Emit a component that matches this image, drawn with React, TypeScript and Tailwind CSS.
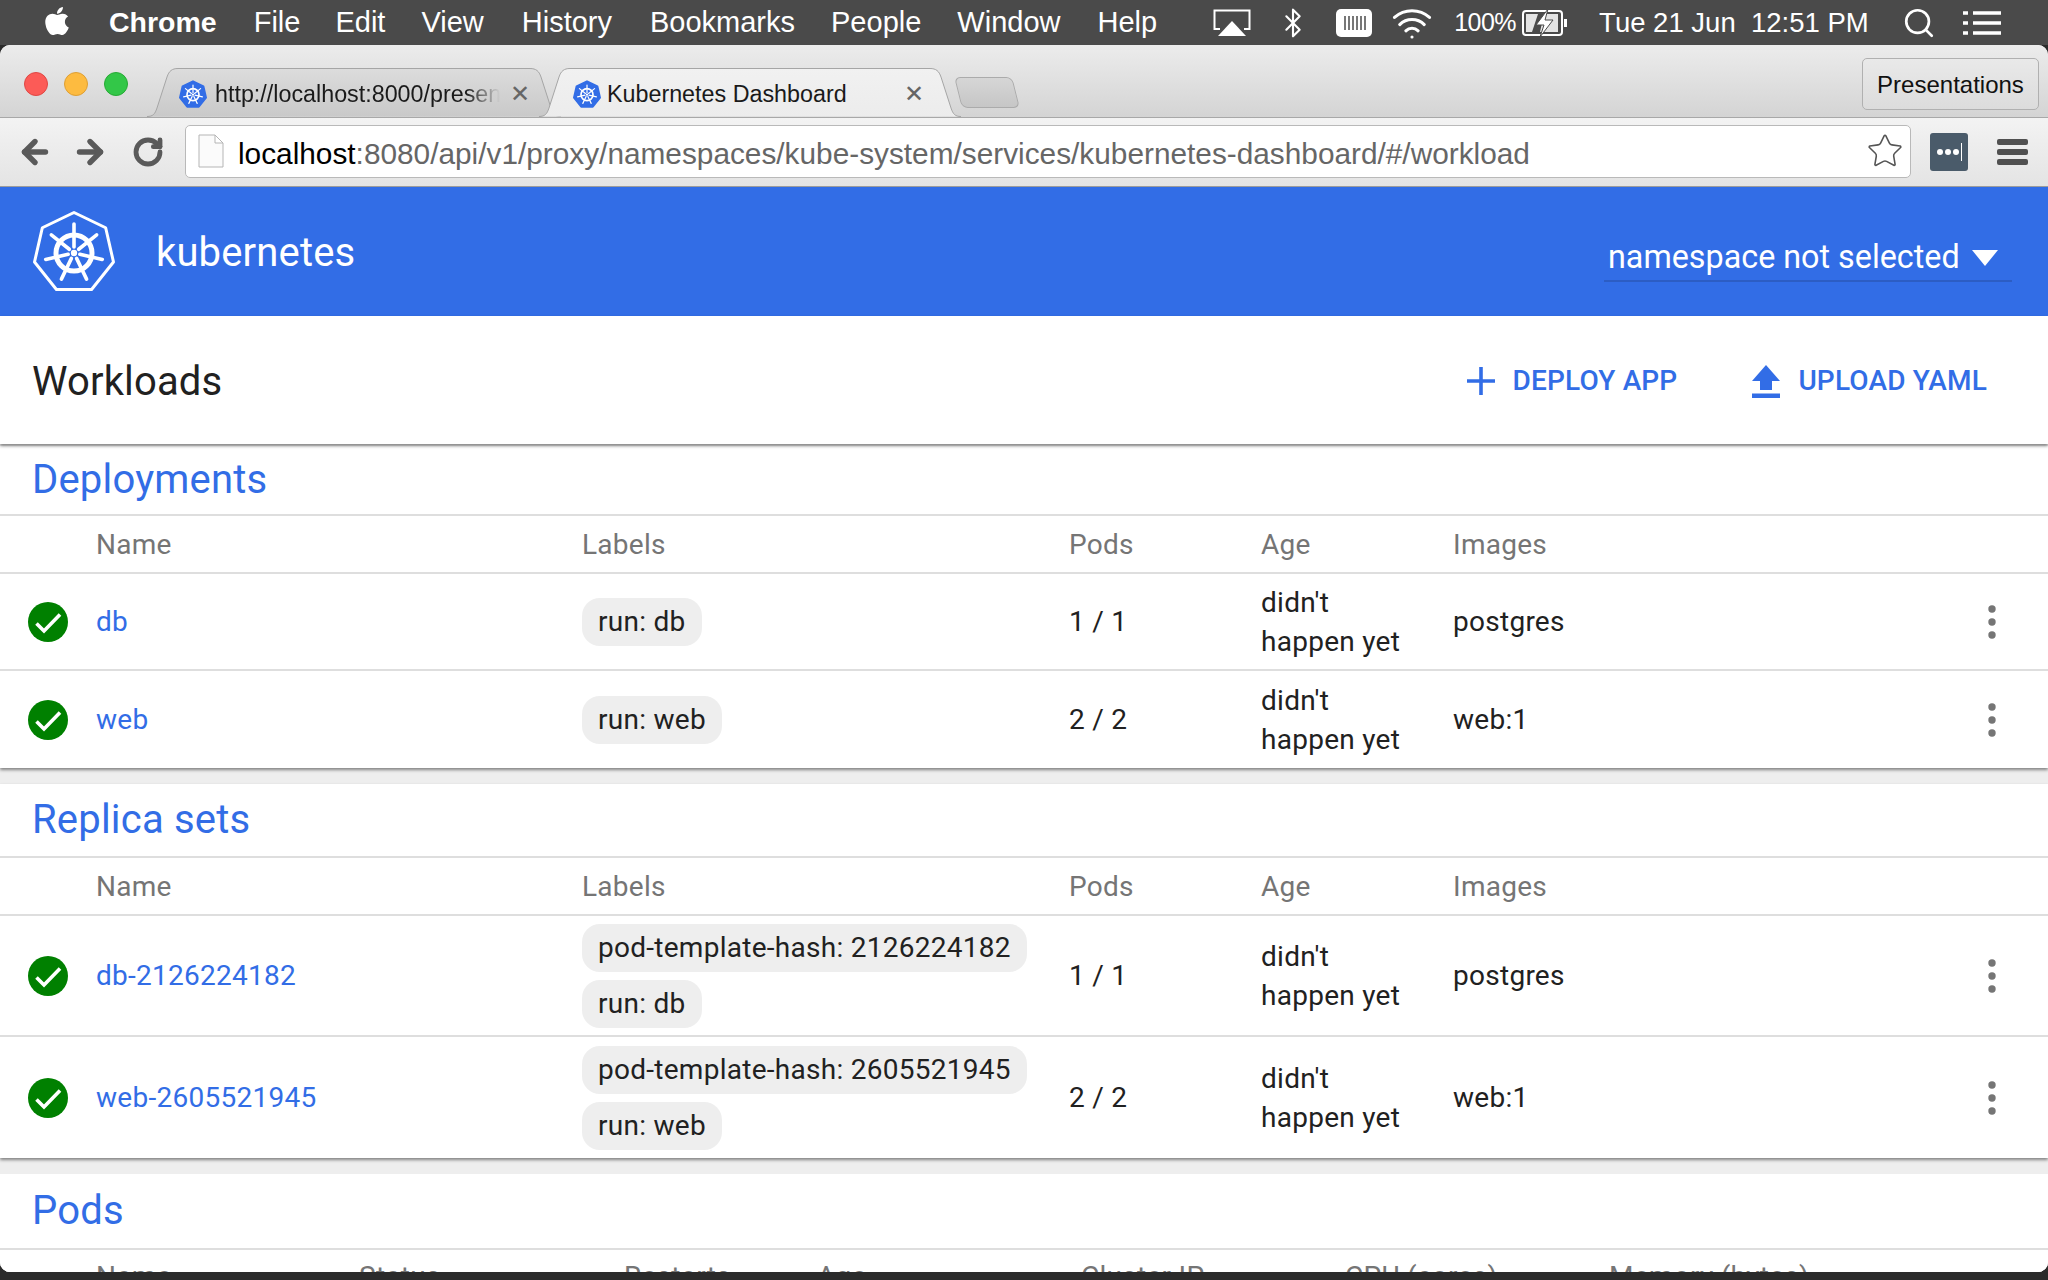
import React from "react";
import { FaApple } from "react-icons/fa";
import { ArrowLeft, ArrowRight, Bluetooth, RotateCw, Search, Star, Wifi } from "lucide-react";

const heptagon = (r: number, cx: number, cy: number) =>
    Array.from({ length: 7 }, (_, k) => {
        const a = (k * 2 * Math.PI) / 7;
        return `${cx + r * Math.sin(a)},${cy - r * Math.cos(a)}`;
    }).join(" ");

const KubeWheel = ({ color, cx, cy }: { color: string; cx: number; cy: number }) => (
    <g stroke={color} fill="none" strokeLinecap="round">
        <circle cx={cx} cy={cy} r="18" strokeWidth="5" />
        <circle cx={cx} cy={cy} r="3.2" fill={color} stroke="none" />
        {Array.from({ length: 7 }, (_, k) => {
            const a = (k * 2 * Math.PI) / 7;
            return (
                <line
                    key={k}
                    x1={cx + 6 * Math.sin(a)}
                    y1={cy - 6 * Math.cos(a)}
                    x2={cx + 29 * Math.sin(a)}
                    y2={cy - 29 * Math.cos(a)}
                    strokeWidth="3.6"
                />
            );
        })}
    </g>
);

const Logo = () => (
    <svg width="84" height="84" viewBox="0 0 84 84" className="shrink-0">
        <polygon points={heptagon(40.5, 42, 43)} fill="none" stroke="white" strokeWidth="3" strokeLinejoin="round" />
        <KubeWheel color="white" cx={42} cy={43} />
    </svg>
);

const Favicon = () => (
    <svg width="28" height="29" viewBox="0 0 84 87" className="shrink-0">
        <polygon points={heptagon(40, 42, 44)} fill="#326de6" stroke="#326de6" strokeWidth="6" strokeLinejoin="round" />
        <KubeWheel color="white" cx={42} cy={44} />
    </svg>
);

const Tab = ({ active, children, width }: { active?: boolean; children: React.ReactNode; width: number }) => (
    <>
        <svg width={width} height="49" viewBox={`0 0 ${width} 49`} className="absolute inset-0">
            <defs>
                <linearGradient id={active ? "tabOn" : "tabOff"} x1="0" y1="0" x2="0" y2="1">
                    <stop offset="0" stopColor={active ? "#f1f1f1" : "#dcdcdc"} />
                    <stop offset="1" stopColor={active ? "#ececec" : "#c9c9c9"} />
                </linearGradient>
            </defs>
            <path
                d={`M0 48.5 C6 48.5 8 46 10 40 L20 9 C22 3 25 .5 31 .5 L${width - 31} .5 C${width - 25} .5 ${width - 22} 3 ${width - 20} 9 L${width - 10} 40 C${width - 8} 46 ${width - 6} 48.5 ${width} 48.5`}
                fill={`url(#${active ? "tabOn" : "tabOff"})`}
                stroke="#a5a5a5"
            />
        </svg>
        <div className="relative flex items-center w-full pt-[3px] text-[23.3px] text-[#1a1a1a] [font-family:'Liberation_Sans',sans-serif]">
            {children}
        </div>
    </>
);

const Check = () => (
    <svg width="40" height="40" viewBox="0 0 40 40">
        <circle cx="20" cy="20" r="20" fill="#008000" />
        <path d="M8.5 21.5 L16 29 L32 12.5" fill="none" stroke="white" strokeWidth="3.6" />
    </svg>
);

const Kebab = () => (
    <svg width="8" height="34" viewBox="0 0 8 34">
        <circle cx="4" cy="4" r="3.7" fill="#757575" />
        <circle cx="4" cy="17" r="3.7" fill="#757575" />
        <circle cx="4" cy="30" r="3.7" fill="#757575" />
    </svg>
);

const Chip = ({ text }: { text: string }) => (
    <span className="block w-fit h-12 leading-[48px] px-[16px] rounded-[18px] bg-[#eeeeee] text-[#212121]">{text}</span>
);

const rowGrid = "grid grid-cols-[96px_486px_487px_192px_192px_1fr_72px]";

type Row = { name: string; labels: string[]; pods: string; image: string };

const Card = ({ title, rows, rowClass, titleClass }: { title: string; rows: Row[]; rowClass: string; titleClass: string }) => (
    <section className="bg-white shadow-[0_2px_3px_rgba(0,0,0,0.45)]">
        <h2 className={`${titleClass} pl-[32px] flex items-center text-[40px] tracking-[0.2px] text-[#326de6] border-b-2 border-[#dedede]`}>{title}</h2>
        <div className={`${rowGrid} h-[58px] pt-[2px] items-center text-[#757575] border-b-2 border-[#dedede]`}>
            <span className="col-start-2">Name</span>
            <span>Labels</span>
            <span>Pods</span>
            <span>Age</span>
            <span>Images</span>
        </div>
        {rows.map((r, i) => (
            <div
                key={r.name}
                className={`${rowGrid} ${rowClass} items-center text-[#212121] ${i < rows.length - 1 ? "border-b-2 border-[#dedede]" : ""}`}
            >
                <span className="pl-7 flex">
                    <Check />
                </span>
                <a className="text-[#326de6]">{r.name}</a>
                <div className="flex flex-col gap-2">
                    {r.labels.map((l) => (
                        <Chip key={l} text={l} />
                    ))}
                </div>
                <span>{r.pods}</span>
                <span className="leading-[39px]">
                    didn't
                    <br />
                    happen yet
                </span>
                <span>{r.image}</span>
                <span className="flex pl-3">
                    <Kebab />
                </span>
            </div>
        ))}
    </section>
);

const MenuItem = ({ children, className }: { children: React.ReactNode; className: string }) => (
    <span className={`shrink-0 ${className}`}>{children}</span>
);

export default function App() {
    return (
        <div className="h-screen overflow-hidden bg-[#2b2b2b] flex flex-col [font-family:Roboto,sans-serif] text-[28px] tracking-[0.27px]">
            {/* mac menu bar */}
            <div className="h-[45px] shrink-0 bg-[#4a4a4a] text-white flex items-center text-[29px] tracking-normal [font-family:'Liberation_Sans',sans-serif] pl-[41px]">
                <FaApple size={32} className="shrink-0 -mt-1" />
                <MenuItem className="ml-[36px] font-bold text-[28.5px]">Chrome</MenuItem>
                <MenuItem className="ml-[37px]">File</MenuItem>
                <MenuItem className="ml-[35px]">Edit</MenuItem>
                <MenuItem className="ml-[36px]">View</MenuItem>
                <MenuItem className="ml-[38px]">History</MenuItem>
                <MenuItem className="ml-[38px]">Bookmarks</MenuItem>
                <MenuItem className="ml-[36px]">People</MenuItem>
                <MenuItem className="ml-[36px]">Window</MenuItem>
                <MenuItem className="ml-[37px]">Help</MenuItem>
                <svg width="38" height="28" viewBox="0 0 38 28" className="ml-[56px] shrink-0">
                    <path d="M7 20 H1.5 V1.5 H36.5 V20 H31" fill="none" stroke="white" strokeWidth="2" />
                    <path d="M19 12 L33 27 H5 Z" fill="white" />
                </svg>
                <Bluetooth size={32} strokeWidth={1.6} className="ml-[26px] shrink-0" />
                <svg width="36" height="28" viewBox="0 0 36 28" className="ml-[27px] shrink-0">
                    <rect width="36" height="28" rx="5" fill="white" />
                    <path d="M9 7 V21 M13 7 V21 M17 7 V21 M21 7 V21 M25 7 V21 M29 7 V21" stroke="#777" strokeWidth="2" />
                </svg>
                <Wifi size={42} strokeWidth={1.8} className="ml-[19px] shrink-0" />
                <MenuItem className="ml-[21px] text-[25px] tracking-[-0.5px]">100%</MenuItem>
                <svg width="46" height="28" viewBox="0 0 46 28" className="ml-[6px] shrink-0">
                    <rect x="1" y="2" width="39" height="24" rx="3" fill="none" stroke="white" strokeWidth="2" />
                    <path d="M4 5 H16 L10 23 H4 Z M22 5 H36 V23 H18 Z" fill="white" fillOpacity="0.85" />
                    <path d="M26 0 L14 16 H22 L18 28 L31 11 H23 Z" fill="white" stroke="#4a4a4a" />
                    <rect x="42" y="10" width="3" height="8" fill="white" />
                </svg>
                <MenuItem className="ml-[31px] whitespace-pre text-[27.5px]">Tue 21 Jun  12:51 PM</MenuItem>
                <Search size={34} strokeWidth={1.9} className="ml-[33px] shrink-0" />
                <svg width="38" height="28" viewBox="0 0 38 28" className="ml-[27px] shrink-0">
                    <path d="M0 4 H5 M10 4 H38 M0 14 H5 M10 14 H38 M0 24 H5 M10 24 H38" stroke="white" strokeWidth="3.5" />
                </svg>
            </div>

            {/* browser window */}
            <div className="h-[1227px] shrink-0 rounded-[10px] overflow-hidden flex flex-col bg-white tracking-normal">
                <div className="h-[73px] shrink-0 bg-gradient-to-b from-[#ececec] to-[#d4d4d4] border-b border-[#a8a8a8] flex items-end relative">
                    <div className="flex gap-4 self-center pl-6 mt-[5px]">
                        <span className="w-6 h-6 rounded-full bg-[#fc5b57] border border-[#df4744]" />
                        <span className="w-6 h-6 rounded-full bg-[#fdbb40] border border-[#de9f34]" />
                        <span className="w-6 h-6 rounded-full bg-[#33c748] border border-[#27aa35]" />
                    </div>
                    <div className="flex items-end ml-[19px]">
                        <div className="relative h-[49px] w-[414px] shrink-0 flex items-center">
                            <Tab width={414}>
                                <span className="ml-[32px]">
                                    <Favicon />
                                </span>
                                <span className="ml-[8px] w-[285px] overflow-hidden whitespace-nowrap [mask-image:linear-gradient(to_right,black_88%,transparent)]">
                                    http://localhost:8000/presentations
                                </span>
                                <span className="ml-[10px] text-[#666] text-[24px]">✕</span>
                            </Tab>
                        </div>
                        <div className="relative h-[49px] w-[422px] shrink-0 flex items-center -ml-[22px]">
                            <Tab active width={422}>
                                <span className="ml-[34px]">
                                    <Favicon />
                                </span>
                                <span className="ml-[6px] w-[296px] whitespace-nowrap">Kubernetes Dashboard</span>
                                <span className="ml-[1px] text-[#666] text-[24px]">✕</span>
                            </Tab>
                        </div>
                        <span className="-ml-[3px] mb-[9px] w-[58px] h-[31px] rounded-[6px] skew-x-[14deg] bg-gradient-to-b from-[#d6d6d6] to-[#c6c6c6] border border-[#ababab]" />
                    </div>
                    <button className="absolute right-[9px] top-[13px] w-[177px] h-[52px] pt-[2px] rounded-[5px] border border-[#b0b0b0] bg-gradient-to-b from-[#e9e9e9] to-[#dcdcdc] text-[24px] text-[#111] [font-family:'Liberation_Sans',sans-serif]">
                        Presentations
                    </button>
                </div>

                <div className="h-[69px] shrink-0 bg-gradient-to-b from-[#f3f3f3] to-[#e4e4e4] border-b border-[#9c9c9c] flex items-center">
                    <ArrowLeft size={36} strokeWidth={3.6} className="ml-[17px] text-[#5a5a5a] shrink-0" />
                    <ArrowRight size={36} strokeWidth={3.6} className="ml-[19px] text-[#5a5a5a] shrink-0" />
                    <RotateCw size={32} strokeWidth={3.6} className="ml-[24px] text-[#5a5a5a] shrink-0" />
                    <div className="ml-[21px] w-[1726px] h-[53px] bg-white rounded-[5px] border border-[#b9b9b9] flex items-center shrink-0 -mt-[2px]">
                        <svg width="26" height="34" viewBox="0 0 26 34" className="ml-[12px] shrink-0">
                            <path d="M1 1 H17 L25 9 V33 H1 Z M17 1 V9 H25" fill="#fbfbfb" stroke="#b5b5b5" />
                        </svg>
                        <span className="ml-[14px] pt-[6px] text-[29.8px] text-[#666] [font-family:'Liberation_Sans',sans-serif] whitespace-nowrap">
                            <span className="text-black">localhost</span>:8080/api/v1/proxy/namespaces/kube-system/services/kubernetes-dashboard/#/workload
                        </span>
                        <Star size={38} strokeWidth={1} className="ml-auto mr-[6px] text-[#555] shrink-0" />
                    </div>
                    <span className="ml-[19px] w-[38px] h-[38px] rounded-[3px] bg-[#4a5b6a] flex items-center justify-center gap-[2px] shrink-0">
                        <span className="w-[6px] h-[6px] rounded-full bg-white" />
                        <span className="w-[6px] h-[6px] rounded-full bg-white" />
                        <span className="w-[6px] h-[6px] rounded-full bg-white" />
                        <span className="w-[1px] h-[18px] bg-white" />
                    </span>
                    <span className="ml-[29px] w-[31px] flex flex-col gap-[4px] shrink-0">
                        <span className="h-[6px] rounded-[2px] bg-[#505050]" />
                        <span className="h-[6px] rounded-[2px] bg-[#505050]" />
                        <span className="h-[6px] rounded-[2px] bg-[#505050]" />
                    </span>
                </div>

                {/* dashboard */}
                <header className="h-[129px] shrink-0 bg-[#326de6] text-white flex items-center pl-8 pr-9">
                    <Logo />
                    <span className="ml-10 mt-[2px] text-[40px] tracking-[0.15px]">kubernetes</span>
                    <div className="ml-auto mt-[10px] w-[408px] h-[50px] border-b-2 border-[#2c5dc4] flex items-center pl-[4px] pt-[4px] text-[32.3px] tracking-normal">
                        namespace not selected
                        <span className="ml-[12px] border-x-[13px] border-x-transparent border-t-[16px] border-t-white" />
                    </div>
                </header>
                <div className="h-[128px] shrink-0 bg-white flex items-center pl-8 text-[40px] tracking-[0.15px] text-[#212121] relative z-10 shadow-[0_2px_3px_rgba(0,0,0,0.45)]">
                    <span className="mt-[3px]">Workloads</span>
                    <div className="ml-auto mt-[2px] flex items-center text-[28px] tracking-[0.15px] font-medium text-[#326de6] pr-[61px]">
                        <svg width="28" height="28" viewBox="0 0 28 28" className="shrink-0">
                            <path d="M14 0 V28 M0 14 H28" stroke="#326de6" strokeWidth="3.6" />
                        </svg>
                        <span className="ml-[18px]">DEPLOY APP</span>
                        <svg width="28" height="33" viewBox="0 0 28 33" className="ml-[75px] shrink-0">
                            <path d="M14 0 L28 16 H20 V25 H8 V16 H0 Z M0 28.5 H28 V33 H0 Z" fill="#326de6" />
                        </svg>
                        <span className="ml-[18px]">UPLOAD YAML</span>
                    </div>
                </div>

                <div className="flex-1 min-h-0 overflow-hidden bg-[#eeeeee] flex flex-col gap-[16px] pt-[2px] tracking-[0.27px]">
                    <Card
                        title="Deployments"
                        titleClass="h-[70px]"
                        rowClass="h-[97px]"
                        rows={[
                            { name: "db", labels: ["run: db"], pods: "1 / 1", image: "postgres" },
                            { name: "web", labels: ["run: web"], pods: "2 / 2", image: "web:1" },
                        ]}
                    />
                    <Card
                        title="Replica sets"
                        titleClass="h-[74px]"
                        rowClass="h-[121px]"
                        rows={[
                            {
                                name: "db-2126224182",
                                labels: ["pod-template-hash: 2126224182", "run: db"],
                                pods: "1 / 1",
                                image: "postgres",
                            },
                            {
                                name: "web-2605521945",
                                labels: ["pod-template-hash: 2605521945", "run: web"],
                                pods: "2 / 2",
                                image: "web:1",
                            },
                        ]}
                    />
                    <section className="bg-white flex-1">
                        <h2 className="h-[76px] pl-[32px] flex items-center text-[40px] tracking-[0.2px] text-[#326de6] border-b-2 border-[#dedede]">Pods</h2>
                        <div className="grid grid-cols-[96px_263px_265px_193px_264px_264px_264px_1fr] h-[54px] items-center text-[#757575]">
                            <span className="col-start-2">Name</span>
                            <span>Status</span>
                            <span>Restarts</span>
                            <span>Age</span>
                            <span>Cluster IP</span>
                            <span>CPU (cores)</span>
                            <span>Memory (bytes)</span>
                        </div>
                    </section>
                </div>
            </div>
        </div>
    );
}
